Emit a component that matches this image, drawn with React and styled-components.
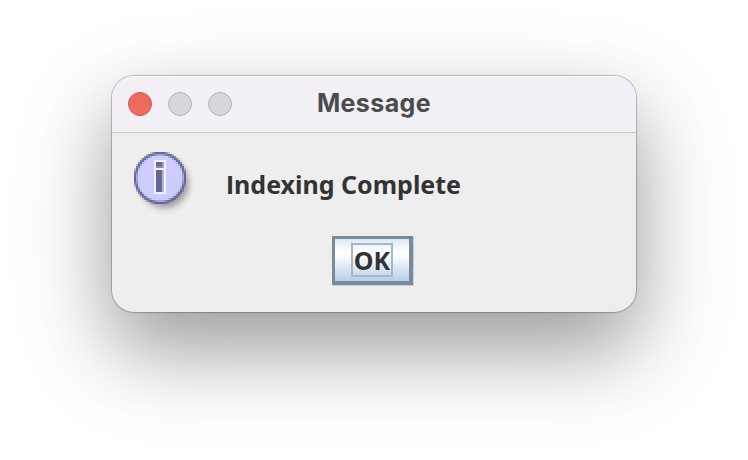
import React from "react";
import styled, { createGlobalStyle } from "styled-components";

const GlobalStyle = createGlobalStyle`
  * { box-sizing: border-box; }
  body { margin: 0; background: #fff; overflow: hidden; }
`;

const Desktop = styled.main`
  width: 748px;
  height: 460px;
  padding: 76px 112px 0;
  background: #fff;
`;

const Dialog = styled.section`
  width: 524px;
  height: 236px;
  overflow: hidden;
  border-radius: 22px;
  background: #eeeeee;
  box-shadow: 0 0 1px 1px rgba(0, 0, 0, 0.24), 0 36px 100px rgba(0, 0, 0, 0.22),
    0 36px 70px rgba(0, 0, 0, 0.22);
`;

const TitleBar = styled.header`
  display: grid;
  grid-template-columns: 120px 1fr 120px;
  align-items: center;
  height: 57px;
  padding-left: 16px;
  padding-right: 16px;
  background: #f2eff6;
  border-bottom: 1px solid #c7c4ca;
  box-shadow: inset 0 1px 0 #faf9fc;
`;

const Controls = styled.div`
  display: flex;
  gap: 16px;
`;

const WindowControl = styled.span`
  width: 24px;
  height: 24px;
  border-radius: 50%;
  background: ${(p) => (p.$active ? "#ed6a5e" : "#d8d5db")};
  border: 1px solid ${(p) => (p.$active ? "#d65246" : "#b8b5bb")};
`;

const Title = styled.h1`
  margin: 0 0 2px;
  text-align: center;
  white-space: nowrap;
  color: #4b4a4c;
  font: 700 25px/30px Inter, sans-serif;
  letter-spacing: 0.4px;
`;

const Content = styled.div`
  display: flex;
  align-items: flex-start;
  height: 103px;
  padding: 19px 22px 0;
`;

const InfoSvg = styled.svg`
  display: block;
  flex: none;
  width: 64px;
  height: 64px;
`;

const Message = styled.p`
  margin: 17px 0 0 28px;
  white-space: nowrap;
  color: #333;
  font: 700 25px/30px "Noto Sans", sans-serif;
  font-feature-settings: "salt" 1, "cv08" 1;
`;

const Actions = styled.footer`
  display: flex;
  padding-left: 220px;
`;

const Button = styled.button`
  display: flex;
  align-items: flex-start;
  justify-content: center;
  width: 81px;
  height: 49px;
  padding: 4px 0 0;
  border: solid #7a8a99;
  border-width: 3px 4px 4px 3px;
  border-radius: 0;
  background: linear-gradient(#dde8f3 0%, #fff 30%, #fff 38%, #b8cfe5 100%);
  box-shadow: 1px 1px 0 #c1d0df;
`;

const Focus = styled.span`
  display: flex;
  align-items: center;
  justify-content: center;
  width: 42px;
  height: 34px;
  border: 2px solid #a3b8cc;
  color: #333;
  font: 700 25px/30px "Noto Sans", sans-serif;
`;

const mix = (a, b, t) => a.map((v, i) => Math.round(v + (b[i] - v) * t));
const clamp = (v) => Math.max(0, Math.min(1, v));

// The disc is a low-resolution bitmap: 26 x 26 cells, two pixels each.
const disc = [];
for (let y = 0; y < 26; y++) {
  for (let x = 0; x < 26; x++) {
    const d = Math.hypot(x - 12.5, y - 12.5);
    const alpha = clamp(13.6 - d);
    if (alpha > 0) {
      const edge = clamp(d - 11.15);
      const rgb = mix([204, 204, 255], [102, 102, 153], edge);
      disc.push({ x: x * 2, y: y * 2, fill: `rgb(${rgb.join(",")})`, alpha });
    }
  }
}

function InfoIcon() {
  return (
    <InfoSvg viewBox="0 0 64 64" aria-label="Information">
      <defs>
        <filter id="softShadow" x="-20%" y="-20%" width="150%" height="150%">
          <feGaussianBlur stdDeviation="3" />
        </filter>
      </defs>
      <circle cx="30.5" cy="31.5" r="24.5" fill="#000" opacity=".33" filter="url(#softShadow)" />
      <g shapeRendering="crispEdges">
        {disc.map((c) => (
          <rect key={`${c.x}-${c.y}`} x={c.x} y={c.y} width="2" height="2" fill={c.fill} fillOpacity={c.alpha} />
        ))}
        <rect x="20" y="8" width="12" height="34" fill="#f2f2ff" />
        <rect x="22" y="10" width="6" height="4" fill="#666699" />
        <rect x="22" y="14" width="6" height="2" fill="#8585b0" />
        <rect x="28" y="10" width="2" height="6" fill="#9c9cc4" />
        <rect x="22" y="18" width="6" height="22" fill="#666699" />
        <rect x="28" y="18" width="2" height="22" fill="#b5b5d8" />
      </g>
    </InfoSvg>
  );
}

export default function App() {
  return (
    <>
      <GlobalStyle />
      <Desktop>
        <Dialog role="dialog" aria-labelledby="dialog-title">
          <TitleBar>
            <Controls>
              <WindowControl $active />
              <WindowControl />
              <WindowControl />
            </Controls>
            <Title id="dialog-title">Message</Title>
          </TitleBar>
          <Content>
            <InfoIcon />
            <Message>Indexing Complete</Message>
          </Content>
          <Actions>
            <Button type="button">
              <Focus>OK</Focus>
            </Button>
          </Actions>
        </Dialog>
      </Desktop>
    </>
  );
}
